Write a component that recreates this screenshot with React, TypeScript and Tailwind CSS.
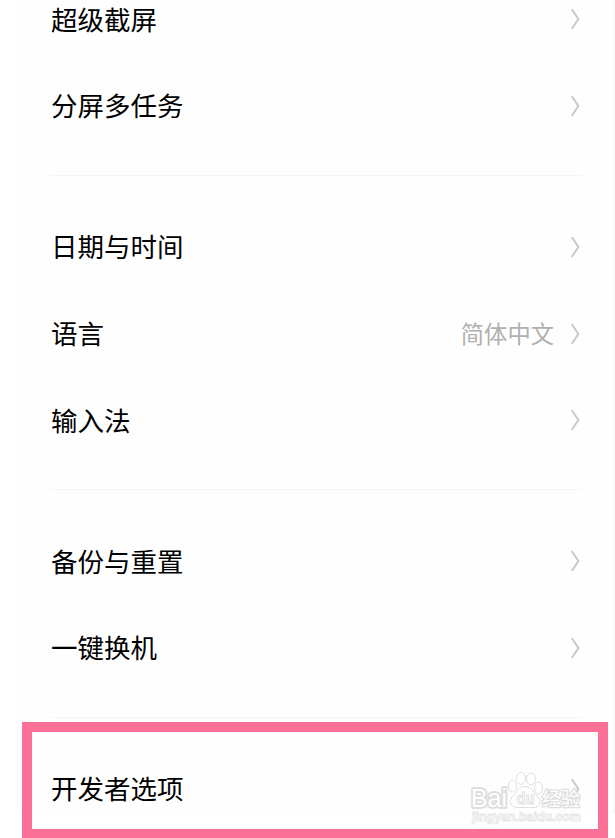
import React from 'react';

interface Item {
  label: string;
  value?: string;
}

const groups: Item[][] = [
  [{ label: '超级截屏' }, { label: '分屏多任务' }],
  [{ label: '日期与时间' }, { label: '语言', value: '简体中文' }, { label: '输入法' }],
  [{ label: '备份与重置' }, { label: '一键换机' }],
  [{ label: '开发者选项' }],
];

function Chevron() {
  return (
    <svg className="w-[9px] h-[22px] shrink-0" viewBox="0 0 9 22" fill="none">
      <path d="M1.2 1.8 L7.4 11 L1.2 20.2" stroke="#c8c8c8" strokeWidth="2" strokeLinecap="round" strokeLinejoin="round" />
    </svg>
  );
}

function Row({ label, value }: Item) {
  return (
    <div className="flex h-[86.7px] items-center pr-[3px]">
      <span className="mb-[1px] flex-1 text-[26.5px] leading-none text-black">{label}</span>
      {value && <span className="mr-[17px] text-[23.3px] leading-none text-[#b0b0b0]">{value}</span>}
      <Chevron />
    </div>
  );
}

function Watermark() {
  return (
    <svg className="absolute left-[468px] top-[768px] h-[60px] w-[120px]" viewBox="0 0 120 60" fill="#ffffff" stroke="#dedede" strokeWidth="1">
      <text x="3" y="38.5" fontSize="25" fontFamily="'Liberation Sans', Arial, sans-serif" strokeWidth="4" strokeLinejoin="round" textLength="36" lengthAdjust="spacingAndGlyphs" style={{ paintOrder: 'stroke' }}>Bai</text>
      <ellipse cx="44.5" cy="18" rx="4" ry="6" />
      <ellipse cx="53" cy="10.3" rx="4.5" ry="6" />
      <ellipse cx="63" cy="11" rx="4.5" ry="6" />
      <ellipse cx="70.5" cy="20" rx="4" ry="6" />
      <path d="M57 18.5 C50 18.5 49 25 46 27 C40 31 41 39.5 50 39.5 L65 39.5 C74 39.5 74 31 68 27 C65 24 64 18.5 57 18.5 Z" />
      <text x="48.5" y="36" fontSize="16" fontWeight="bold" fontFamily="'Liberation Sans', Arial, sans-serif" textLength="18" lengthAdjust="spacingAndGlyphs">du</text>
      <text x="74" y="37.5" fontSize="19" fontFamily="'Noto Sans CJK SC', sans-serif" strokeWidth="2.6" strokeLinejoin="round" textLength="38" style={{ paintOrder: 'stroke' }}>经验</text>
      <text x="4" y="53" fontSize="12.5" fill="#ffffff" stroke="#e6e6e6" strokeWidth="0.9" fontFamily="'Liberation Sans', Arial, sans-serif" fontWeight="bold" textLength="109" lengthAdjust="spacingAndGlyphs">jingyan.baidu.com</text>
    </svg>
  );
}

export default function App() {
  return (
    <div className="relative h-[838px] overflow-hidden bg-white pl-[17px] font-['Noto_Sans_CJK_SC',sans-serif]">
      <div className="h-full border-l border-r-2 border-l-[#fbfbfb] border-r-[#f7f7f7] bg-[#fefefe] pl-[33px] pr-[30px]">
        <div className="-mt-[24.1px] flow-root">
          {groups.map((items, i) => (
            <section key={i}>
              {i > 0 && <div className="mt-[25.8px] mb-[27.5px] h-px bg-[#f5f5f5]" />}
              {items.map((item) => (
                <Row key={item.label} {...item} />
              ))}
            </section>
          ))}
        </div>
      </div>
      {/* highlight around developer options */}
      <div className="absolute left-[22px] top-[722px] h-[117px] w-[586px] border-[10px] border-[#fa7096]" />
      <Watermark />
    </div>
  );
}
